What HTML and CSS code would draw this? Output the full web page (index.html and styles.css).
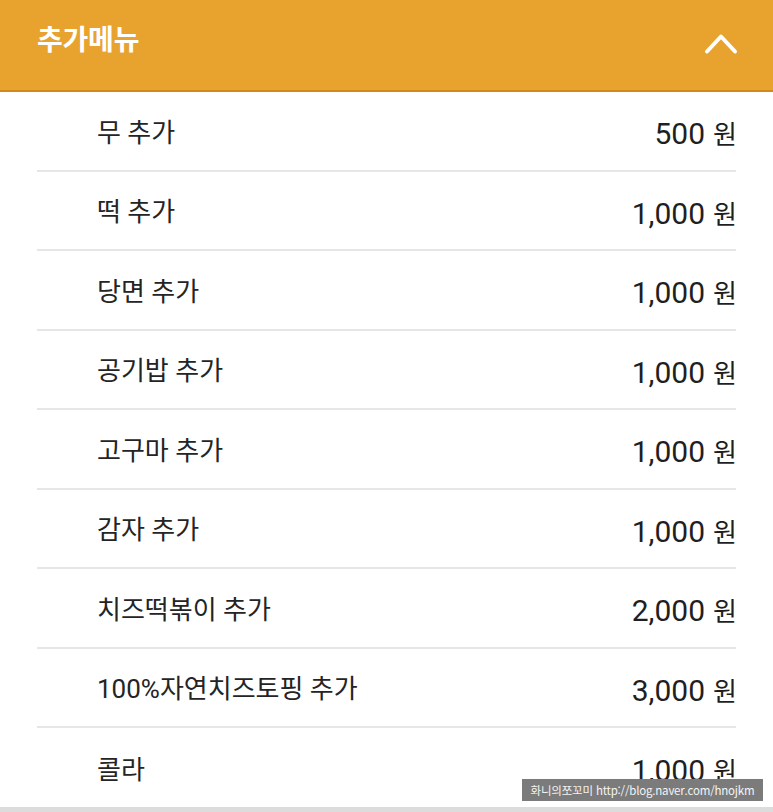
FILE: index.html
```html
<!DOCTYPE html>
<html lang="ko">
<head>
<meta charset="utf-8">
<title>추가메뉴</title>
<link rel="stylesheet" href="styles.css">
</head>
<body>
<div class="page">
  <header class="header">
    <h1 class="title">추가메뉴</h1>
    <svg class="chevron" width="34" height="22" viewBox="0 0 34 22" aria-hidden="true">
      <polyline points="3,18.5 17,3.5 31,18.5" fill="none" stroke="#fff" stroke-width="4" stroke-linecap="round" stroke-linejoin="round"/>
    </svg>
  </header>
  <ul class="list">
    <li class="item"><span class="name">무 추가</span><span class="price">500<span class="won">원</span></span></li>
    <li class="item"><span class="name">떡 추가</span><span class="price">1,000<span class="won">원</span></span></li>
    <li class="item"><span class="name">당면 추가</span><span class="price">1,000<span class="won">원</span></span></li>
    <li class="item"><span class="name">공기밥 추가</span><span class="price">1,000<span class="won">원</span></span></li>
    <li class="item"><span class="name">고구마 추가</span><span class="price">1,000<span class="won">원</span></span></li>
    <li class="item"><span class="name">감자 추가</span><span class="price">1,000<span class="won">원</span></span></li>
    <li class="item"><span class="name">치즈떡볶이 추가</span><span class="price">2,000<span class="won">원</span></span></li>
    <li class="item"><span class="name">100%자연치즈토핑 추가</span><span class="price">3,000<span class="won">원</span></span></li>
    <li class="item"><span class="name">콜라</span><span class="price">1,000<span class="won">원</span></span></li>
  </ul>
  <div class="bottom-bar"></div>
  <div class="watermark">화니의쪼꼬미 http://blog.naver.com/hnojkm</div>
</div>
</body>
</html>
```
FILE: styles.css
```css
html, body {
  margin: 0;
  padding: 0;
  background: #fff;
}

.page {
  position: relative;
  width: 773px;
  height: 812px;
  overflow: hidden;
  font-family: Roboto, "Noto Sans CJK KR", sans-serif;
}

.header {
  box-sizing: border-box;
  height: 92px;
  background: #E8A32E;
  border-bottom: 2px solid #D2881E;
  display: flex;
  align-items: flex-start;
  justify-content: space-between;
  padding: 0 37px 0 37px;
}

.title {
  margin: 18px 0 0 0;
  font-family: "Noto Sans CJK KR", sans-serif;
  font-weight: 700;
  font-size: 28px;
  line-height: 40px;
  color: #fff;
  letter-spacing: -0.2px;
}

.chevron {
  display: block;
  margin: 33px -2px 0 0;
}

.list {
  list-style: none;
  margin: 0;
  padding: 0 37px 0 37px;
}

.item {
  box-sizing: border-box;
  height: 79.5px;
  border-bottom: 2px solid #E6E6E6;
  display: flex;
  align-items: center;
  justify-content: space-between;
  padding-left: 60px;
}

.item:last-child {
  height: 79px;
  border-bottom: none;
}

.name {
  font-size: 26px;
  color: #242424;
  margin-top: -1px;
}

.price {
  font-size: 30px;
  color: #1f1f1f;
  margin-top: 4px;
  margin-right: -1px;
  display: flex;
  align-items: baseline;
}

.won {
  font-family: "Noto Sans CJK KR", sans-serif;
  font-size: 26px;
  margin-left: 8px;
}

.bottom-bar {
  height: 6px;
  background: #DCDCDC;
}

.watermark {
  position: absolute;
  left: 522px;
  top: 779px;
  width: 241px;
  height: 22px;
  box-sizing: border-box;
  background: #7B7B7B;
  color: #f4f4f4;
  font-family: "Noto Sans CJK KR", sans-serif;
  font-size: 11.5px;
  line-height: 22px;
  text-align: center;
  white-space: nowrap;
  letter-spacing: -0.2px;
}
```
